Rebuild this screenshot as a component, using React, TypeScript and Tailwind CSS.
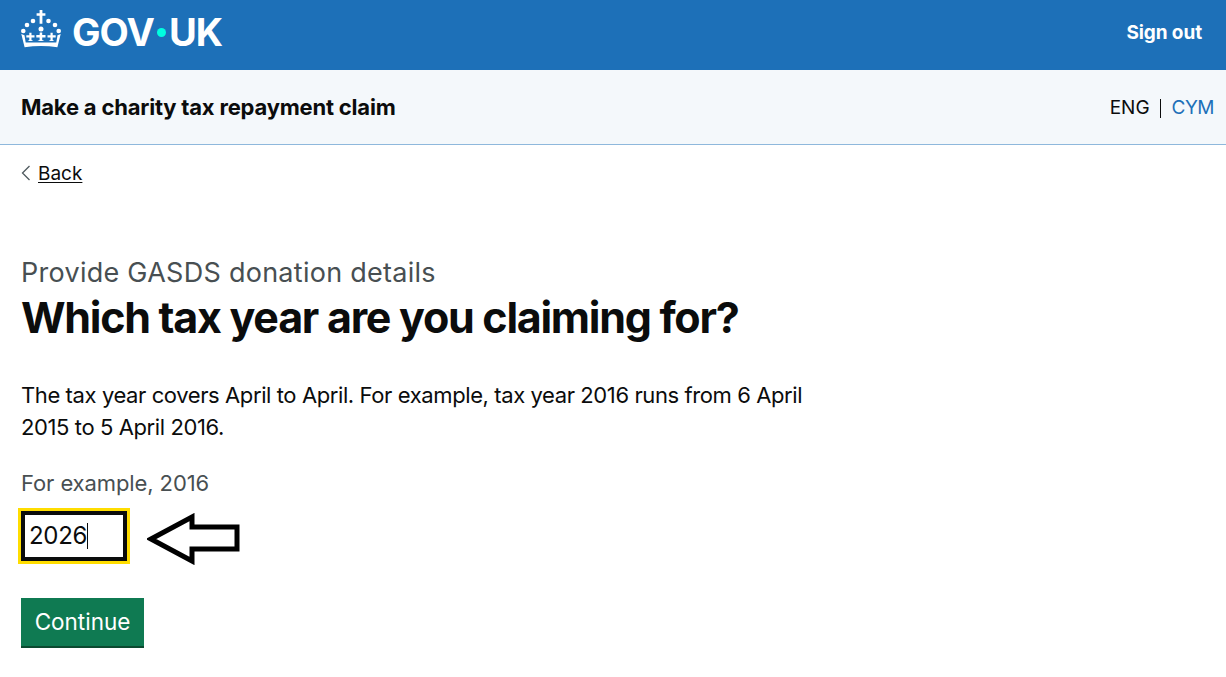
function Crown() {
  return (
    <svg width="42" height="40" viewBox="0 0 42 40" fill="white" className="mt-px shrink-0">
      <path d="M19.600 1h2.800v3.200h3v2.600h-3v8h-2.800v-8h-3V4.200h3z" />
      <circle cx="13" cy="12" r="2.300" />
      <circle cx="28.500" cy="12" r="2.300" />
      <circle cx="7" cy="16" r="2.300" />
      <circle cx="35" cy="16" r="2.300" />
      <circle cx="3.300" cy="22" r="2.300" />
      <circle cx="38.700" cy="22" r="2.300" />
      <circle cx="21" cy="20" r="2.500" />
      <path d="M19.800 23.500h2.400v2.600h3.300v2.400h-3.300v2.500l2.200 1h-7l2.200-1v-2.500h-3.300v-2.400h3.300z" />
      <path d="M9.300 23.800h2.200v2.400h3v2.200h-3v2.500l1.800 1h-5.600l1.600-1v-2.500h-3v-2.200h3z" />
      <path d="M30.500 23.800h2.200v2.400h3v2.200h-3v2.500l1.600 1h-5.600l1.800-1v-2.500h-3v-2.200h3z" />
      <path d="M1.300 25l3.200 1.200 1.200 7.300h30.600l1.200-7.300 3.200-1.200-3.300 13.300q-16.400-2.800-32.800 0z" />
    </svg>
  );
}

function Arrow() {
  return (
    <svg width="94" height="52" viewBox="0 0 94 52" fill="white" stroke="black" strokeWidth="5" className="mt-[2px] ml-[20px] shrink-0">
      <path d="M4 26 L45 4 V14 H90 V36 H45 V48 Z" strokeLinejoin="miter" />
    </svg>
  );
}

export default function App() {
  return (
    <div className="min-h-[677px] bg-white font-['Inter',sans-serif] text-[#0b0c0c]">
      <header className="flex h-[70px] items-start justify-between bg-[#1d70b8] pl-[20px] pr-6 text-white">
        <div className="mt-[8px] flex items-start gap-[10px]">
          <Crown />
          <span className="flex items-center text-[38px] leading-[48px] font-bold tracking-[-0.9px]">
            GOV<span className="mx-[3px] h-[9px] w-[9px] rounded-full bg-[#00ffe0]" />UK
          </span>
        </div>
        <a className="mt-[21px] text-[19px] leading-6 font-bold tracking-[-0.1px]">Sign out</a>
      </header>

      <div className="flex h-[75px] items-center justify-between border-b border-[#8eb8dc] bg-[#f4f8fb] pl-[21px] pr-3">
        <p className="text-[22px] font-bold tracking-[-0.2px]">Make a charity tax repayment claim</p>
        <div className="mt-[2px] flex items-center text-[19px]">
          <span>ENG</span>
          <span className="mr-[11px] ml-[10px] h-[19px] w-px bg-[#0b0c0c]" />
          <a className="tracking-[-0.5px] text-[#1d70b8]">CYM</a>
        </div>
      </div>

      <main className="pl-[21px]">
        <a className="mt-[17px] flex items-center gap-[8px] text-[19px] leading-6">
          <svg width="9" height="16" viewBox="0 0 9 16" fill="none" stroke="#505a5f" strokeWidth="1.300" className="mb-[3px] shrink-0">
            <path d="M8.500 1 L1.500 8 L8.500 15" />
          </svg>
          <span className="underline underline-offset-2">Back</span>
        </a>

        <p className="mt-[71px] text-[27px] leading-8 tracking-[0.27px] text-[#484f52]">Provide GASDS donation details</p>
        <h1 className="mt-px text-[43px] leading-[55px] font-bold tracking-[-1.28px]">Which tax year are you claiming for?</h1>

        <p className="mt-[34px] w-[810px] text-[22px] leading-8 tracking-[-0.4px]">
          The tax year covers April to April. For example, tax year 2016 runs from 6 April 2015 to 5 April 2016.
        </p>

        <p className="mt-[24px] text-[22px] leading-8 tracking-[-0.1px] text-[#484f52]">For example, 2016</p>

        <div className="mt-[12px] flex items-start">
          <div className="flex h-[50px] w-[106px] items-center border-4 border-[#0b0c0c] pl-1 text-[24px] outline-3 outline-[#ffdd00]">
            <span className="tracking-[-0.3px]">2026</span>
            <span className="h-[26px] w-px bg-[#0b0c0c]" />
          </div>
          <Arrow />
        </div>

        <button className="mt-[33px] flex h-[50px] w-[123px] items-center justify-center border-b-2 border-[#0b4a30] bg-[#0f7a52] text-[22.500px] text-white">
          Continue
        </button>
      </main>
    </div>
  );
}
